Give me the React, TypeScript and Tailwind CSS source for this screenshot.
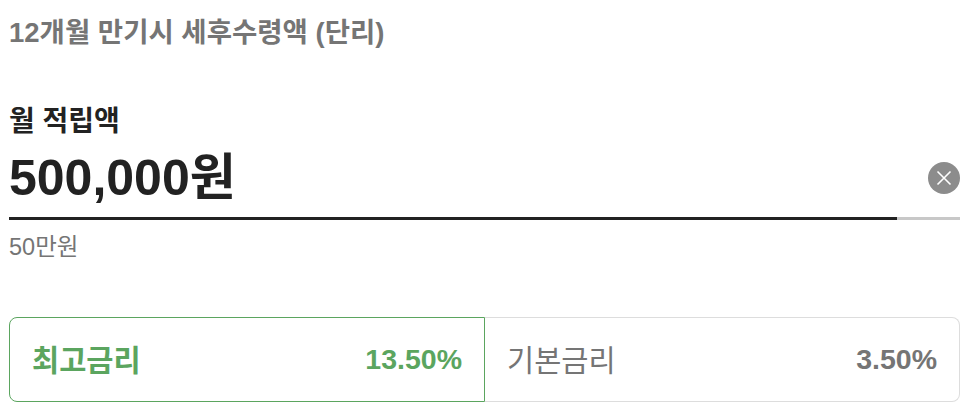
export default function App() {
  return (
    <div className="w-[976px] h-[412px] bg-white pl-[9px] pr-[16px] overflow-hidden font-['Liberation_Sans','Noto_Sans_CJK_KR',sans-serif]">
      <div className="pt-[16px] text-[27.5px] leading-[34px] font-bold text-[#757575]">12개월 만기시 세후수령액 (단리)</div>
      <div className="mt-[55px] text-[28px] leading-[34px] font-bold text-[#222222]">월 적립액</div>
      <div className="flex items-center justify-between h-[79px] mt-[-1px]">
        <div className="text-[50px] leading-[62px] font-bold text-[#222222]">500,000원</div>
        <div className="w-[32px] h-[32px] rounded-full bg-[#8c8c8c] flex items-center justify-center">
          <svg width="16" height="16" viewBox="0 0 16 16" fill="none" stroke="white" strokeWidth="1.6"><path d="M1.5 1.5L14.5 14.5M14.5 1.5L1.5 14.5" /></svg>
        </div>
      </div>
      <div className="flex h-[3px]">
        <div className="w-[888px] bg-[#222222]"></div>
        <div className="flex-1 bg-[#c8c8c8]"></div>
      </div>
      <div className="mt-[13px] text-[23.5px] leading-[28px] text-[#757575]">50만원</div>
      <div className="mt-[56px] flex h-[85px]">
        <div className="w-[476px] border border-[#5ba55f] rounded-l-[8px] flex items-center justify-between pl-[22px] pr-[22px]">
          <span className="pt-[3px] text-[29.5px] font-bold text-[#5ba55f]">최고금리</span>
          <span className="text-[28.5px] font-bold text-[#5ba55f]">13.50%</span>
        </div>
        <div className="flex-1 border border-l-0 border-[#dddddd] rounded-r-[8px] flex items-center justify-between px-[22px]">
          <span className="pt-[3px] text-[29.5px] text-[#757575]">기본금리</span>
          <span className="text-[28.5px] font-bold text-[#757575]">3.50%</span>
        </div>
      </div>
    </div>
  );
}
